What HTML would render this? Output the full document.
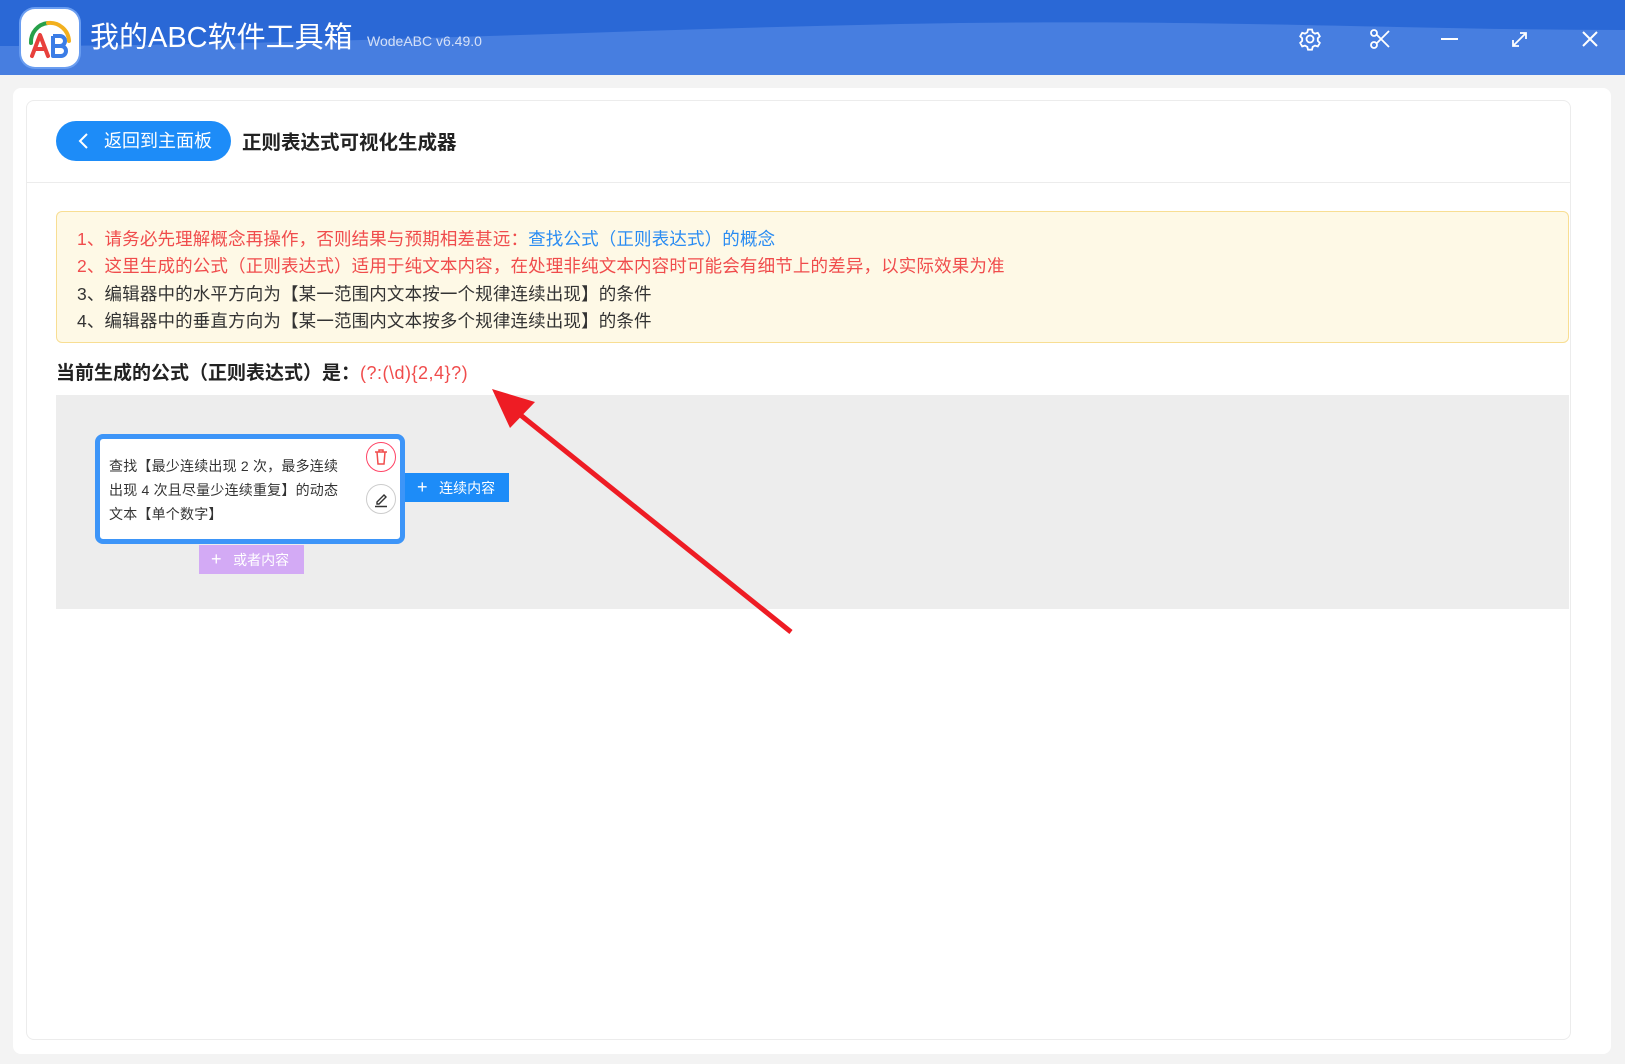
<!DOCTYPE html>
<html><head><meta charset="utf-8"><style>
*{margin:0;padding:0;box-sizing:border-box}
body{width:1625px;height:1064px;background:#f3f3f3;font-family:"Liberation Sans","Noto Sans CJK SC",sans-serif;position:relative;overflow:hidden}
.hdr{position:absolute;left:0;top:0;width:1625px;height:75px;background:#477ee0;overflow:hidden}
.abs{position:absolute}
.panel{position:absolute;left:13px;top:88px;width:1598px;height:966px;background:#fff;border-radius:8px}
.card{position:absolute;left:26px;top:100px;width:1545px;height:940px;border:1px solid #ececec;border-radius:8px;background:#fff}
.note div{position:absolute;left:20px;font-size:17.5px;line-height:20px;white-space:nowrap;letter-spacing:0.15px}
</style></head><body>
<div class="hdr">
<svg class="abs" style="left:0;top:0" width="1625" height="75"><path d="M0 0H1625V30C1400 30 1200 18 900 24C600 30 300 46 0 46Z" fill="#2a68d6"/></svg>
<div class="abs" style="left:21px;top:9px;width:58px;height:58px;border-radius:14px;background:#fff;box-shadow:0 0 0 2px #6a9df0"></div>
<svg class="abs" style="left:21px;top:9px" width="58" height="58">
<path d="M10 34A19 19 0 0 1 27 14" stroke="#27a04a" stroke-width="4" fill="none" stroke-linecap="round"/>
<path d="M27 14A19 19 0 0 1 48 32" stroke="#f2b01e" stroke-width="4" fill="none" stroke-linecap="round"/>
<path d="M11 47L19 26L27 47M14 40H24" stroke="#e8403c" stroke-width="4" fill="none" stroke-linecap="round" stroke-linejoin="round"/>
<path d="M32 27V47H40A5 5 0 0 0 40 37H32M32 27H39A5 5 0 0 1 39 37" stroke="#3b7de6" stroke-width="4" fill="none" stroke-linejoin="round"/>
</svg>
<div class="abs" style="left:90px;top:18px;color:#fff;font-size:29px;line-height:40px">我的ABC软件工具箱</div>
<div class="abs" style="left:367px;top:33px;color:#d4e0f7;font-size:14px">WodeABC v6.49.0</div>
<svg class="abs" style="left:1298px;top:27px" width="24" height="24" fill="none" stroke="#fff" stroke-width="1.8"><circle cx="12" cy="12" r="3.5"/><path d="M10 2.5h4l.7 2.8 2.3 1.3 2.8-.8 2 3.5-2 2v2.6l2 2-2 3.5-2.8-.8-2.3 1.3-.7 2.8h-4l-.7-2.8-2.3-1.3-2.8.8-2-3.5 2-2v-2.6l-2-2 2-3.5 2.8.8 2.3-1.3z"/></svg>
<svg class="abs" style="left:1369px;top:28px" width="22" height="22" fill="none" stroke="#fff" stroke-width="1.8"><circle cx="5" cy="5" r="3"/><circle cx="5" cy="17" r="3"/><path d="M7.5 6.5L20 19M7.5 15.5L20 3"/></svg>
<div class="abs" style="left:1441px;top:38px;width:17px;height:2px;background:#fff"></div>
<svg class="abs" style="left:1510px;top:30px" width="19" height="19" fill="none" stroke="#fff" stroke-width="1.8"><path d="M3 16L16 3M10 3h6v6M3 10v6h6"/></svg>
<svg class="abs" style="left:1581px;top:30px" width="18" height="18" stroke="#fff" stroke-width="2"><path d="M2 2L16 16M16 2L2 16"/></svg>
</div>
<div class="panel"></div>
<div class="card"></div>
<div class="abs" style="left:26px;top:182px;width:1545px;height:1px;background:#ececec"></div>
<div class="abs" style="left:56px;top:121px;width:175px;height:40px;border-radius:20px;background:#1d8cf8;color:#fff;font-size:18px;line-height:40px;padding-left:48px">返回到主面板</div>
<svg class="abs" style="left:78px;top:132px" width="12" height="18" fill="none" stroke="#fff" stroke-width="2"><path d="M9 2L2 9L9 16"/></svg>
<div class="abs" style="left:242px;top:131px;font-size:19.5px;font-weight:bold;color:#222;line-height:24px">正则表达式可视化生成器</div>
<div class="abs note" style="left:56px;top:211px;width:1513px;height:132px;background:#fef9e6;border:1px solid #f8de93;border-radius:6px">
<div style="top:17px;color:#f04c4c">1、请务必先理解概念再操作，否则结果与预期相差甚远：<span style="color:#2a8cf2">查找公式（正则表达式）的概念</span></div>
<div style="top:44px;color:#f04c4c">2、这里生成的公式（正则表达式）适用于纯文本内容，在处理非纯文本内容时可能会有细节上的差异，以实际效果为准</div>
<div style="top:72px;color:#333">3、编辑器中的水平方向为【某一范围内文本按一个规律连续出现】的条件</div>
<div style="top:99px;color:#333">4、编辑器中的垂直方向为【某一范围内文本按多个规律连续出现】的条件</div>
</div>
<div class="abs" style="left:56px;top:361px;font-size:19px;font-weight:bold;color:#222;line-height:24px;white-space:nowrap">当前生成的公式（正则表达式）是：<span style="font-weight:normal;color:#f04c4c;font-size:18px;letter-spacing:0.5px">(?:(\d){2,4}?)</span></div>
<div class="abs" style="left:56px;top:395px;width:1513px;height:214px;background:#ededed"></div>
<div class="abs" style="left:95px;top:434px;width:310px;height:110px;border:5px solid #3d95f8;border-radius:8px;background:#fff"></div>
<div class="abs" style="left:109px;top:454px;width:246px;font-size:14px;line-height:24px;color:#333;letter-spacing:0.2px">查找【最少连续出现 2 次，最多连续<br>出现 4 次且尽量少连续重复】的动态<br>文本【单个数字】</div>
<div class="abs" style="left:366px;top:442px;width:30px;height:30px;border-radius:50%;border:1px solid #f46;background:#fff"></div>
<svg class="abs" style="left:373px;top:448px" width="16" height="18" fill="none" stroke="#f04c4c" stroke-width="1.5"><path d="M2 4H14M6 4V2H10V4M4 4L5 16H11L12 4"/></svg>
<div class="abs" style="left:366px;top:484px;width:30px;height:30px;border-radius:50%;border:1px solid #ccc;background:#fff"></div>
<svg class="abs" style="left:373px;top:490px" width="16" height="18" fill="none" stroke="#333" stroke-width="1.4"><path d="M4 12L11 5L13 7L6 14H4Z M2 16.5H14"/></svg>
<div class="abs" style="left:405px;top:473px;width:104px;height:29px;background:#1d8cf8;color:#fff;font-size:14px;line-height:29px;padding-left:12px;white-space:nowrap"><span style="font-size:18px">+</span>&nbsp;&nbsp;&nbsp;连续内容</div>
<div class="abs" style="left:199px;top:545px;width:105px;height:29px;background:#d3aaf5;color:#fff;font-size:14px;line-height:29px;padding-left:12px;white-space:nowrap"><span style="font-size:18px">+</span>&nbsp;&nbsp;&nbsp;或者内容</div>
<svg class="abs" style="left:0;top:0" width="1625" height="1064"><path d="M791 632L518 413" stroke="#ee1c24" stroke-width="5"/><path d="M492 389L535 402L510 428Z" fill="#ee1c24"/></svg>
</body></html>
